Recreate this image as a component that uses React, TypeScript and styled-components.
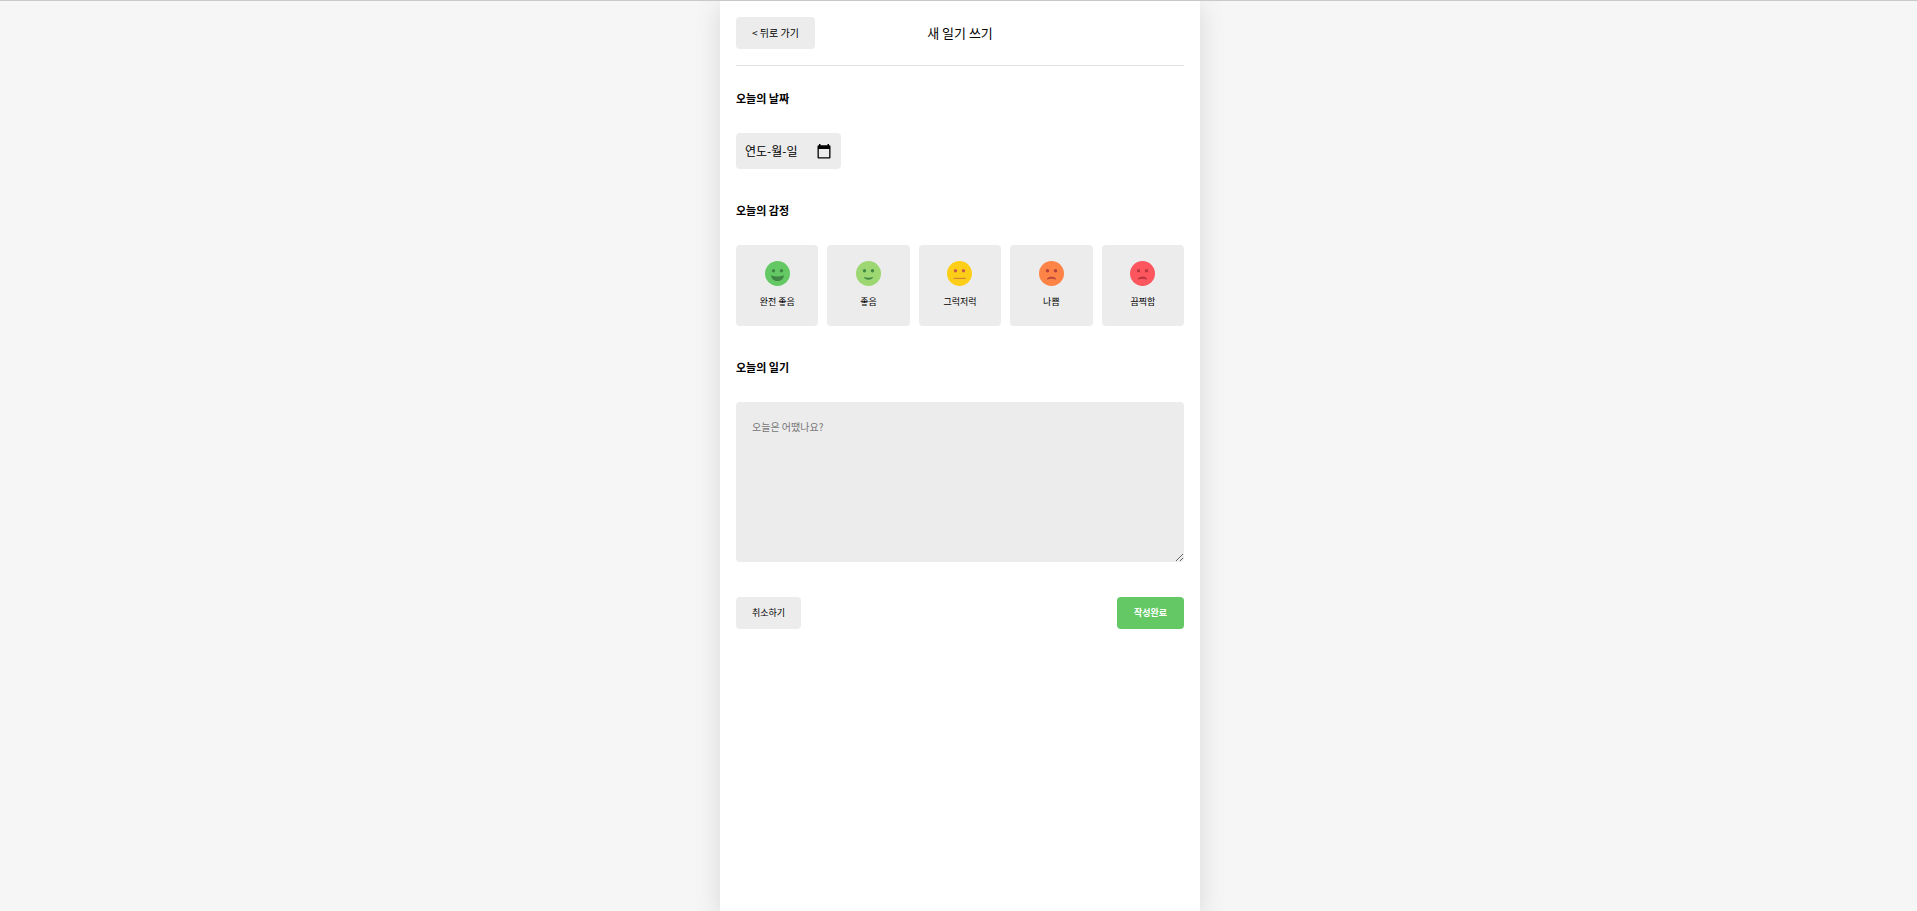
import React, { useState } from "react";
import styled, { createGlobalStyle } from "styled-components";

const GlobalStyle = createGlobalStyle`
  * { box-sizing: border-box; }
  body {
    margin: 0;
    background: #f6f6f6;
    color: #000;
    font-family: "Noto Sans CJK KR", "Noto Sans", sans-serif;
  }
  button, input, textarea { font-family: inherit; color: inherit; }
`;

const Page = styled.div`
  display: flex;
  justify-content: center;
  min-height: 100vh;
  padding-left: 3px;
  border-top: 1px solid #c9c9c9;
  overflow: hidden;
`;

const Sheet = styled.div`
  width: 100%;
  max-width: 480px;
  padding: 0 16px;
  background: #fff;
  box-shadow: 0 6px 24px rgba(100, 100, 111, 0.2);
`;

const Header = styled.header`
  display: grid;
  grid-template-columns: 1fr auto 1fr;
  align-items: center;
  padding: 16px 0;
  border-bottom: 1px solid #e2e2e2;
`;

const Title = styled.h1`
  margin: 0;
  font-size: 13px;
  font-weight: 400;
  line-height: 18px;
`;

const Button = styled.button<{ $tone?: "plain" | "positive"; $size?: number }>`
  justify-self: start;
  height: 32px;
  padding: 0 ${(p) => (p.$tone === "positive" ? 17 : 16)}px;
  border: none;
  border-radius: 4px;
  background: ${(p) => (p.$tone === "positive" ? "#64c964" : "#ececec")};
  color: ${(p) => (p.$tone === "positive" ? "#fff" : "#000")};
  font-size: ${(p) => p.$size ?? 9}px;
  font-weight: ${(p) => (p.$tone === "positive" ? 700 : 400)};
  line-height: 16px;
  white-space: nowrap;
  cursor: pointer;
`;

const Form = styled.form`
  display: flex;
  flex-direction: column;
  gap: 30px;
  padding-top: 21px;
`;

const Section = styled.section`
  display: flex;
  flex-direction: column;
  gap: 24px;
`;

const Heading = styled.h2`
  margin: 0;
  font-size: 11px;
  font-weight: 700;
  line-height: 22px;
`;

const DateField = styled.div`
  display: flex;
  align-items: center;
  justify-content: space-between;
  width: 105px;
  height: 36px;
  padding: 0 10px 0 9px;
  border-radius: 4px;
  background: #ececec;
`;

const DateInput = styled.input`
  flex: 1;
  min-width: 0;
  padding: 0;
  border: none;
  outline: none;
  background: transparent;
  font-size: 12px;
  line-height: 18px;
  &::placeholder { color: #000; opacity: 1; }
  &::-webkit-calendar-picker-indicator { display: none; }
`;

const IconButton = styled.button`
  display: flex;
  padding: 0;
  border: none;
  background: none;
  cursor: pointer;
`;

const Moods = styled.div`
  display: grid;
  grid-template-columns: repeat(5, 1fr);
  gap: 9px;
`;

const MoodCard = styled.label`
  display: flex;
  flex-direction: column;
  align-items: center;
  gap: 8px;
  padding: 16px 0;
  position: relative;
  border-radius: 4px;
  background: #ececec;
  font-size: 9px;
  line-height: 16px;
  cursor: pointer;
`;

const MoodRadio = styled.input`
  position: absolute;
  inset: 0;
  margin: 0;
  appearance: none;
  border-radius: 4px;
  cursor: pointer;
`;

const DiaryText = styled.textarea`
  display: block;
  width: 100%;
  height: 160px;
  padding: 16px;
  border: none;
  border-radius: 4px;
  background: #ececec;
  font-size: 10px;
  line-height: 18px;
  resize: vertical;
  &::placeholder { color: #757575; opacity: 1; }
`;

const Actions = styled.div`
  display: flex;
  align-items: center;
  justify-content: space-between;
  padding: 5px 0 32px;
`;

type Mood = { label: string; color: string; ink: string; face: React.ReactNode };

const roundEyes = (
  <>
    <circle cx="8.5" cy="9.8" r="1.7" fill="currentColor" />
    <circle cx="16.5" cy="9.8" r="1.7" fill="currentColor" />
  </>
);

const frown = (
  <path
    d="M8 18.2C9.2 15.2 15.8 15.2 17 18.2C14.5 17.2 10.5 17.2 8 18.2Z"
    fill="currentColor"
    stroke="currentColor"
    strokeWidth="0.5"
    strokeLinejoin="round"
  />
);

const moods: Mood[] = [
  {
    label: "완전 좋음",
    color: "#64c964",
    ink: "#3f8645",
    face: (
      <>
        {roundEyes}
        <path d="M6 14.2Q12.5 16.6 19 14.2C18.6 18 16 20 12.5 20C9 20 6.4 18 6 14.2Z" fill="currentColor" />
      </>
    ),
  },
  {
    label: "좋음",
    color: "#9dd772",
    ink: "#418845",
    face: (
      <>
        {roundEyes}
        <path d="M7.8 16C10.5 17 14.5 17 17.2 16C16 19.6 9 19.6 7.8 16Z" fill="currentColor" />
      </>
    ),
  },
  {
    label: "그럭저럭",
    color: "#fdce17",
    ink: "#c75f4c",
    face: (
      <>
        {roundEyes}
        <path d="M7.2 17.4H18.2" stroke="#d98433" strokeWidth="1.4" strokeLinecap="round" />
      </>
    ),
  },
  { label: "나쁨", color: "#fd8446", ink: "#b5423a", face: <>{roundEyes}{frown}</> },
  {
    label: "끔찍함",
    color: "#fd565f",
    ink: "#b0303a",
    face: (
      <>
        <path
          d="M7.2 8.5L9.8 11.1M9.8 8.5L7.2 11.1M15.2 8.5L17.8 11.1M17.8 8.5L15.2 11.1"
          stroke="currentColor"
          strokeWidth="1.2"
        />
        {frown}
      </>
    ),
  },
];

const Face = ({ mood }: { mood: Mood }) => (
  <svg width="25" height="25" viewBox="0 0 25 25" fill="none" color={mood.ink} aria-hidden="true">
    <circle cx="12.5" cy="12.5" r="12.5" fill={mood.color} />
    {mood.face}
  </svg>
);

const CalendarIcon = () => (
  <svg width="14" height="15" viewBox="0 0 14 15" aria-hidden="true">
    <path
      fillRule="evenodd"
      d="M2 0H3.5V1.3H10.5V0H12V1.3H12.5Q13.5 1.3 13.5 2.3V13.5Q13.5 14.5 12.5 14.5H1.5Q0.5 14.5 0.5 13.5V2.3Q0.5 1.3 1.5 1.3H2ZM1.8 5V13.2H12.2V5Z"
    />
  </svg>
);

export default function App() {
  const [date, setDate] = useState("");
  const [editing, setEditing] = useState(false);
  const [mood, setMood] = useState("");

  return (
    <>
      <GlobalStyle />
      <Page>
        <Sheet>
          <Header>
            <Button type="button" $size={10}>{"< 뒤로 가기"}</Button>
            <Title>새 일기 쓰기</Title>
          </Header>
          <Form onSubmit={(e) => e.preventDefault()}>
            <Section>
              <Heading><label htmlFor="date">오늘의 날짜</label></Heading>
              <DateField>
                <DateInput
                  id="date"
                  type={editing || date ? "date" : "text"}
                  placeholder="연도-월-일"
                  value={date}
                  onFocus={() => setEditing(true)}
                  onBlur={() => setEditing(false)}
                  onChange={(e) => setDate(e.target.value)}
                />
                <IconButton
                  type="button"
                  aria-label="달력 열기"
                  onClick={() => document.getElementById("date")?.focus()}
                >
                  <CalendarIcon />
                </IconButton>
              </DateField>
            </Section>
            <Section>
              <Heading id="mood-heading">오늘의 감정</Heading>
              <Moods role="radiogroup" aria-labelledby="mood-heading">
                {moods.map((m) => (
                  <MoodCard key={m.label}>
                    <MoodRadio
                      type="radio"
                      name="mood"
                      value={m.label}
                      checked={mood === m.label}
                      onChange={() => setMood(m.label)}
                    />
                    <Face mood={m} />
                    {m.label}
                  </MoodCard>
                ))}
              </Moods>
            </Section>
            <Section>
              <Heading><label htmlFor="diary">오늘의 일기</label></Heading>
              <DiaryText id="diary" placeholder="오늘은 어땠나요?" />
            </Section>
            <Actions>
              <Button type="button">취소하기</Button>
              <Button type="submit" $tone="positive">작성완료</Button>
            </Actions>
          </Form>
        </Sheet>
      </Page>
    </>
  );
}
